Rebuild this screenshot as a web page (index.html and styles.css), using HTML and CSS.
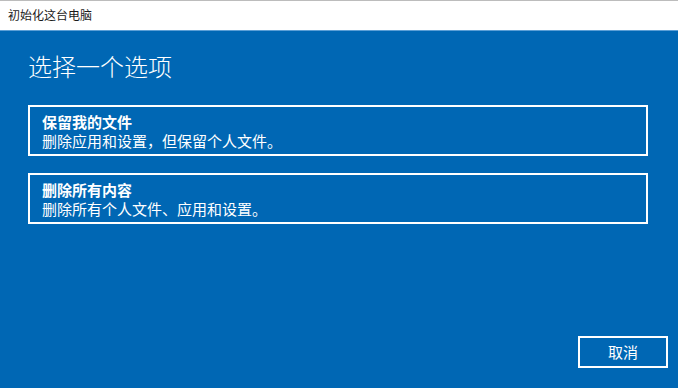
FILE: index.html
```html
<!DOCTYPE html>
<html lang="zh-CN">
<head>
<meta charset="utf-8">
<title>初始化这台电脑</title>
<link rel="stylesheet" href="styles.css">
</head>
<body>
<div class="window">
  <div class="titlebar">初始化这台电脑</div>
  <div class="content">
    <h1 class="heading">选择一个选项</h1>
    <div class="options">
      <div class="option">
        <div class="option-title">保留我的文件</div>
        <div class="option-desc">删除应用和设置，但保留个人文件。</div>
      </div>
      <div class="option">
        <div class="option-title">删除所有内容</div>
        <div class="option-desc">删除所有个人文件、应用和设置。</div>
      </div>
    </div>
    <div class="footer">
      <button class="cancel">取消</button>
    </div>
  </div>
</div>
</body>
</html>
```
FILE: styles.css
```css
html, body {
  margin: 0;
  padding: 0;
  width: 678px;
  height: 388px;
  overflow: hidden;
}
body {
  font-family: "Noto Sans CJK SC", "Noto Sans", sans-serif;
}
.window {
  display: flex;
  flex-direction: column;
  width: 678px;
  height: 388px;
}
.titlebar {
  box-sizing: border-box;
  height: 30px;
  border-top: 1px solid #bcbcbc;
  background: #ffffff;
  color: #1a1a1a;
  font-size: 12px;
  line-height: 28px;
  padding-left: 8px;
}
.content {
  flex: 1;
  display: flex;
  flex-direction: column;
  background: #0067b4;
  border-top: 1px solid #5c9fd6;
  padding: 19px 10px 20px 28px;
  color: #ffffff;
}
.heading {
  margin: 0;
  font-size: 24px;
  font-weight: 300;
  line-height: 32px;
}
.options {
  display: flex;
  flex-direction: column;
  gap: 17px;
  margin: 23px 20px 0 0;
}
.option {
  box-sizing: border-box;
  height: 51px;
  border: 2px solid #ffffff;
  padding: 5px 12px 0;
  font-size: 15px;
  line-height: 19px;
}
.option-title {
  font-weight: 700;
}
.footer {
  margin-top: auto;
  display: flex;
  justify-content: flex-end;
}
.cancel {
  box-sizing: border-box;
  width: 90px;
  height: 32px;
  border: 2px solid #ffffff;
  background: transparent;
  color: #ffffff;
  font-family: "Noto Sans CJK SC", "Noto Sans", sans-serif;
  font-size: 15px;
  line-height: 26px;
  padding: 0;
}
```
